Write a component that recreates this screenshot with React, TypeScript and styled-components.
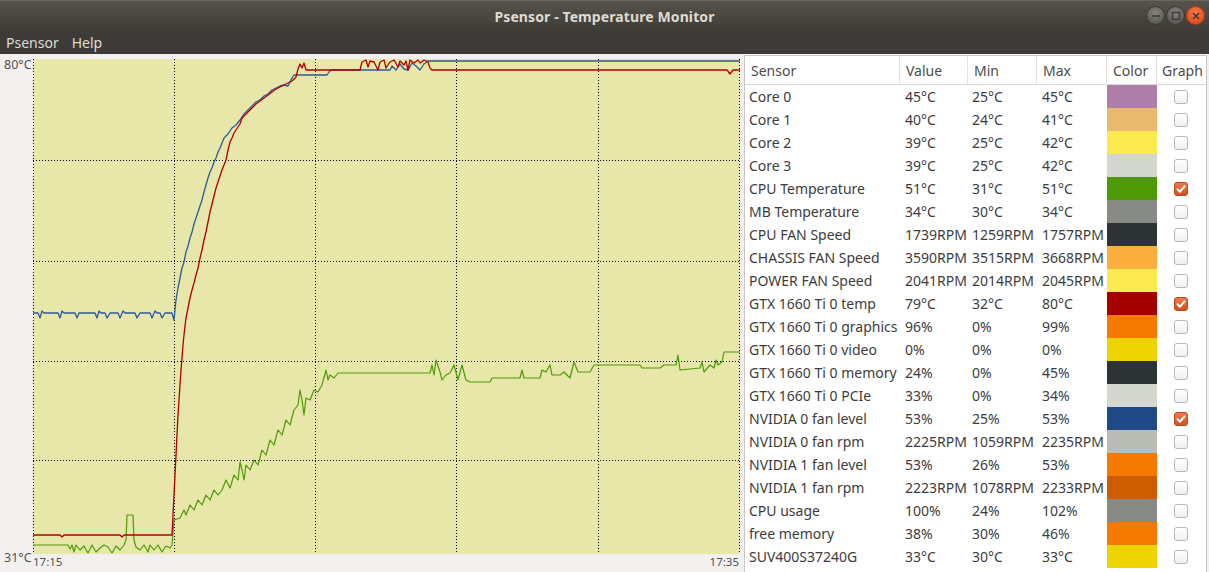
import React from "react";
import styled, { createGlobalStyle } from "styled-components";

const GlobalStyle = createGlobalStyle`
  html, body { margin: 0; padding: 0; background: #f2f1f0; }
  body { font-family: "Noto Sans", "DejaVu Sans", sans-serif; }
  * { box-sizing: border-box; }
`;

const Window = styled.div`
  width: 1209px;
  height: 572px;
  display: flex;
  flex-direction: column;
  overflow: hidden;
  background: #f2f1f0;
`;

const TitleBar = styled.div`
  height: 32px;
  flex: none;
  position: relative;
  display: flex;
  align-items: center;
  justify-content: center;
  background: linear-gradient(#58544c, #46443e 60%, #3f3d38);
  border-top: 1px solid #6a665e;
`;

const Title = styled.div`
  color: #dfdbd2;
  font-weight: 700;
  font-size: 14px;
  letter-spacing: 0.1px;
`;

const WindowButtons = styled.div`
  position: absolute;
  right: 4px;
  top: 5px;
  display: flex;
  gap: 1px;
`;

const WinButton = styled.div<{ $close?: boolean }>`
  width: 19px;
  height: 19px;
  border-radius: 50%;
  display: flex;
  align-items: center;
  justify-content: center;
  border: 1px solid ${(p) => (p.$close ? "#b53c17" : "#3a3833")};
  background: ${(p) =>
    p.$close
      ? "radial-gradient(circle at 50% 35%, #f7764a, #e2521f 70%)"
      : "radial-gradient(circle at 50% 35%, #86847e, #5f5d58 70%)"};
`;

const MenuBar = styled.div`
  height: 22px;
  flex: none;
  display: flex;
  align-items: center;
  gap: 13px;
  padding-left: 6px;
  background: #3c3b37;
`;

const MenuItem = styled.span`
  color: #dfdbd2;
  font-size: 14px;
  line-height: 20px;
`;

const Main = styled.div`
  flex: 1;
  display: flex;
  min-height: 0;
`;

const GraphPanel = styled.div`
  width: 741px;
  flex: none;
  padding-top: 5px;
  display: grid;
  grid-template-columns: 33px 707px;
  grid-template-rows: 495px 14px;
`;

const YAxis = styled.div`
  grid-row: 1 / 3;
  grid-column: 1;
  display: flex;
  flex-direction: column;
  justify-content: space-between;
  margin-top: -1px;
  padding: 0 0 3px 4px;
`;

const AxisLabel = styled.span<{ $small?: boolean }>`
  font-size: ${(p) => (p.$small ? 11.5 : 12.5)}px;
  line-height: 14px;
  color: #525252;
`;

const Plot = styled.svg`
  grid-row: 1;
  grid-column: 2;
  display: block;
  background: #e8e7aa;
`;

const XAxis = styled.div`
  grid-row: 2;
  grid-column: 2;
  display: flex;
  justify-content: space-between;
  padding-top: 1px;
  padding-right: 1px;
`;

const TablePanel = styled.div`
  flex: 1;
  margin: 1px 3px 0 3px;
  border: 1px solid #c9c6c1;
  border-bottom: none;
  background: #ffffff;
  display: flex;
  flex-direction: column;
`;

const COLS = "155px 68px 69px 70px 50px 49px";

const HeaderRow = styled.div`
  display: grid;
  grid-template-columns: ${COLS};
  height: 29px;
  border-bottom: 1px solid #dedbd8;
`;

const HeaderCell = styled.div<{ $last?: boolean }>`
  display: flex;
  align-items: center;
  padding-left: ${(p) => (p.$last ? "5px" : "6px")};
  font-size: 14px;
  color: #4c4c4c;
  border-right: ${(p) => (p.$last ? "none" : "1px solid #e4e2df")};
`;

const Row = styled.div`
  display: grid;
  grid-template-columns: ${COLS};
  height: 23px;
`;

const Cell = styled.div<{ $pad?: number }>`
  display: flex;
  align-items: center;
  padding-left: ${(p) => p.$pad ?? 5}px;
  font-size: 14px;
  color: #3c3c3c;
  white-space: nowrap;
`;

const Swatch = styled.div<{ $color: string }>`
  background: ${(p) => p.$color};
  height: 23px;
`;

const CheckCell = styled.div`
  display: flex;
  align-items: center;
  justify-content: center;
  padding-right: 1px;
`;

const CheckBox = styled.div<{ $checked?: boolean }>`
  width: 14px;
  height: 14px;
  border-radius: 3px;
  display: flex;
  align-items: center;
  justify-content: center;
  border: 1px solid ${(p) => (p.$checked ? "#b4481f" : "#b9b7b3")};
  background: ${(p) =>
    p.$checked ? "linear-gradient(#ef7a4d, #d2521f)" : "linear-gradient(#ffffff, #f1f0ee)"};
`;

type Sensor = { name: string; value: string; min: string; max: string; color: string; graph?: boolean };

const sensors: Sensor[] = [
  { name: "Core 0", value: "45°C", min: "25°C", max: "45°C", color: "#ad7fa8" },
  { name: "Core 1", value: "40°C", min: "24°C", max: "41°C", color: "#e9b96e" },
  { name: "Core 2", value: "39°C", min: "25°C", max: "42°C", color: "#fce94f" },
  { name: "Core 3", value: "39°C", min: "25°C", max: "42°C", color: "#d3d7cf" },
  { name: "CPU Temperature", value: "51°C", min: "31°C", max: "51°C", color: "#4e9a06", graph: true },
  { name: "MB Temperature", value: "34°C", min: "30°C", max: "34°C", color: "#888a85" },
  { name: "CPU FAN Speed", value: "1739RPM", min: "1259RPM", max: "1757RPM", color: "#2e3436" },
  { name: "CHASSIS FAN Speed", value: "3590RPM", min: "3515RPM", max: "3668RPM", color: "#fcaf3e" },
  { name: "POWER FAN Speed", value: "2041RPM", min: "2014RPM", max: "2045RPM", color: "#fce94f" },
  { name: "GTX 1660 Ti 0 temp", value: "79°C", min: "32°C", max: "80°C", color: "#a40000", graph: true },
  { name: "GTX 1660 Ti 0 graphics", value: "96%", min: "0%", max: "99%", color: "#f57900" },
  { name: "GTX 1660 Ti 0 video", value: "0%", min: "0%", max: "0%", color: "#edd400" },
  { name: "GTX 1660 Ti 0 memory", value: "24%", min: "0%", max: "45%", color: "#2e3436" },
  { name: "GTX 1660 Ti 0 PCIe", value: "33%", min: "0%", max: "34%", color: "#d3d7cf" },
  { name: "NVIDIA 0 fan level", value: "53%", min: "25%", max: "53%", color: "#204a87", graph: true },
  { name: "NVIDIA 0 fan rpm", value: "2225RPM", min: "1059RPM", max: "2235RPM", color: "#babdb6" },
  { name: "NVIDIA 1 fan level", value: "53%", min: "26%", max: "53%", color: "#f57900" },
  { name: "NVIDIA 1 fan rpm", value: "2223RPM", min: "1078RPM", max: "2233RPM", color: "#ce5c00" },
  { name: "CPU usage", value: "100%", min: "24%", max: "102%", color: "#888a85" },
  { name: "free memory", value: "38%", min: "30%", max: "46%", color: "#f57900" },
  { name: "SUV400S37240G", value: "33°C", min: "30°C", max: "33°C", color: "#edd400" },
];

// Curve points in window coordinates; plot origin is (33, 59).
const blue: number[][] = [
  [33, 313], [38, 313], [40, 318], [42, 311], [44, 313], [58, 313], [60, 318], [62, 311], [64, 313], [75, 313],
  [77, 318], [79, 313], [95, 313], [97, 318], [99, 311], [101, 313], [105, 313], [107, 318], [110, 313],
  [118, 313], [120, 318], [123, 311], [125, 313], [135, 313], [137, 318], [140, 313], [150, 313], [152, 318],
  [155, 311], [157, 313], [160, 313], [162, 318], [165, 313], [172, 313], [174, 320], [176, 300], [178, 288],
  [180, 278], [182, 268], [184, 262], [186, 252], [188, 246], [190, 238], [192, 232], [194, 224], [196, 218],
  [198, 212], [200, 206], [202, 200], [204, 192], [206, 185], [208, 178], [210, 172], [212, 168], [214, 162],
  [216, 158], [218, 152], [220, 148], [222, 143], [224, 138], [228, 134], [232, 128], [236, 125], [240, 120],
  [244, 114], [248, 110], [252, 106], [256, 102], [260, 100], [264, 96], [268, 94], [272, 90], [276, 88],
  [280, 86], [284, 85], [288, 86], [290, 82], [292, 78], [294, 75], [327, 75], [329, 72], [331, 70], [390, 70],
  [392, 66], [396, 70], [400, 64], [404, 69], [408, 70], [412, 63], [416, 66], [420, 70], [424, 64], [428, 61],
  [432, 61], [740, 61],
];

const red: number[][] = [
  [33, 535], [60, 535], [62, 537], [64, 535], [120, 535], [122, 537], [124, 535], [172, 535], [173, 515],
  [174, 495], [175, 475], [176, 455], [177, 435], [178, 415], [179, 400], [180, 385], [181, 370], [182, 358],
  [183, 345], [184, 335], [185, 326], [186, 318], [188, 308], [190, 298], [192, 290], [194, 283], [196, 275],
  [198, 268], [200, 258], [202, 250], [204, 240], [206, 232], [208, 222], [210, 212], [212, 204], [214, 196],
  [216, 188], [218, 182], [220, 176], [222, 170], [224, 165], [226, 160], [228, 150], [230, 142], [232, 138],
  [234, 133], [236, 130], [238, 127], [240, 124], [242, 118], [244, 116], [248, 112], [252, 108], [256, 104],
  [260, 101], [264, 98], [268, 95], [272, 92], [276, 89], [280, 87], [284, 85], [288, 83], [292, 81], [296, 77],
  [298, 69], [300, 64], [302, 68], [304, 63], [306, 70], [360, 70], [362, 62], [366, 60], [368, 67], [370, 61],
  [374, 62], [378, 70], [380, 62], [384, 60], [386, 68], [390, 62], [394, 60], [398, 67], [400, 61], [404, 65],
  [406, 61], [408, 70], [410, 60], [414, 63], [418, 60], [420, 63], [424, 60], [428, 62], [430, 68], [432, 70],
  [727, 70], [730, 74], [733, 70], [740, 70],
];

const green: number[][] = [
  [33, 545], [68, 545], [70, 549], [72, 545], [74, 552], [76, 545], [80, 550], [84, 546], [88, 553], [92, 545],
  [96, 552], [100, 548], [104, 545], [108, 547], [112, 553], [116, 546], [120, 550], [124, 545], [126, 540],
  [127, 515], [133, 515], [134, 540], [136, 547], [140, 550], [144, 545], [148, 552], [150, 545], [154, 550],
  [158, 545], [162, 552], [166, 546], [170, 548], [172, 545], [174, 520], [180, 518], [184, 510], [186, 515],
  [190, 505], [194, 510], [198, 500], [202, 505], [206, 495], [210, 500], [214, 490], [218, 495], [222, 490],
  [226, 480], [230, 488], [234, 475], [238, 480], [240, 462], [242, 470], [244, 480], [246, 465], [250, 470],
  [254, 460], [258, 465], [262, 450], [266, 455], [270, 440], [274, 445], [278, 430], [282, 435], [286, 420],
  [290, 425], [294, 410], [298, 405], [300, 390], [302, 400], [304, 415], [306, 398], [310, 400], [314, 390],
  [318, 392], [322, 385], [326, 370], [328, 380], [330, 375], [334, 378], [338, 373], [430, 373], [432, 365],
  [434, 375], [436, 360], [440, 372], [442, 380], [446, 375], [450, 373], [454, 365], [458, 380], [462, 365],
  [466, 380], [470, 382], [490, 382], [492, 378], [520, 378], [522, 370], [524, 378], [540, 378], [542, 370],
  [546, 372], [550, 365], [552, 375], [560, 375], [564, 372], [570, 378], [574, 362], [578, 372], [590, 372],
  [594, 365], [640, 365], [642, 368], [660, 368], [664, 365], [676, 365], [678, 355], [680, 370], [700, 368],
  [702, 362], [704, 372], [710, 365], [714, 368], [716, 360], [718, 365], [722, 362], [724, 352], [740, 352],
];

const toPoints = (pts: number[][]) => pts.map(([x, y]) => `${x - 33},${y - 59}`).join(" ");

const vLines = [0.5, 141.5, 282.5, 423.5, 565.5, 706.5];
const hLines = [101.5, 202.5, 302.5, 401.5];

const Chart = () => (
  <Plot width={707} height={495} viewBox="0 0 707 495">
    {vLines.map((x) => (
      <line key={`v${x}`} x1={x} y1={0} x2={x} y2={495} stroke="#000" strokeWidth={1} strokeDasharray="1 2" />
    ))}
    {hLines.map((y) => (
      <line key={`h${y}`} x1={0} y1={y} x2={707} y2={y} stroke="#000" strokeWidth={1} strokeDasharray="1 2" />
    ))}
    <polyline points={toPoints(green)} fill="none" stroke="#4e9a06" strokeWidth={1.2} strokeLinejoin="round" />
    <polyline points={toPoints(blue)} fill="none" stroke="#2c5a9a" strokeWidth={1.3} strokeLinejoin="round" />
    <polyline points={toPoints(red)} fill="none" stroke="#b00000" strokeWidth={1.3} strokeLinejoin="round" />
  </Plot>
);

const Check = () => (
  <svg width="12" height="12" viewBox="0 0 12 12">
    <path d="M2.5 6.2 L5 8.7 L9.6 3.4" fill="none" stroke="#fff" strokeWidth="2" strokeLinecap="round" strokeLinejoin="round" />
  </svg>
);

export default function App() {
  return (
    <>
      <GlobalStyle />
      <Window>
        <TitleBar>
          <Title>Psensor - Temperature Monitor</Title>
          <WindowButtons>
            <WinButton>
              <svg width="10" height="10" viewBox="0 0 10 10">
                <line x1="1" y1="5" x2="9" y2="5" stroke="#3c3b37" strokeWidth="1.6" />
              </svg>
            </WinButton>
            <WinButton>
              <svg width="10" height="10" viewBox="0 0 10 10">
                <rect x="1.5" y="1.5" width="7" height="7" fill="none" stroke="#3c3b37" strokeWidth="1.4" />
              </svg>
            </WinButton>
            <WinButton $close>
              <svg width="10" height="10" viewBox="0 0 10 10">
                <path d="M2 2 L8 8 M8 2 L2 8" stroke="#3c3b37" strokeWidth="1.6" />
              </svg>
            </WinButton>
          </WindowButtons>
        </TitleBar>
        <MenuBar>
          <MenuItem>Psensor</MenuItem>
          <MenuItem>Help</MenuItem>
        </MenuBar>
        <Main>
          <GraphPanel>
            <YAxis>
              <AxisLabel>80°C</AxisLabel>
              <AxisLabel>31°C</AxisLabel>
            </YAxis>
            <Chart />
            <XAxis>
              <AxisLabel $small>17:15</AxisLabel>
              <AxisLabel $small>17:35</AxisLabel>
            </XAxis>
          </GraphPanel>
          <TablePanel>
            <HeaderRow>
              <HeaderCell>Sensor</HeaderCell>
              <HeaderCell>Value</HeaderCell>
              <HeaderCell>Min</HeaderCell>
              <HeaderCell>Max</HeaderCell>
              <HeaderCell>Color</HeaderCell>
              <HeaderCell $last>Graph</HeaderCell>
            </HeaderRow>
            {sensors.map((s) => (
              <Row key={s.name}>
                <Cell $pad={4}>{s.name}</Cell>
                <Cell>{s.value}</Cell>
                <Cell $pad={4}>{s.min}</Cell>
                <Cell>{s.max}</Cell>
                <Swatch $color={s.color} />
                <CheckCell>
                  <CheckBox $checked={s.graph}>{s.graph && <Check />}</CheckBox>
                </CheckCell>
              </Row>
            ))}
          </TablePanel>
        </Main>
      </Window>
    </>
  );
}
